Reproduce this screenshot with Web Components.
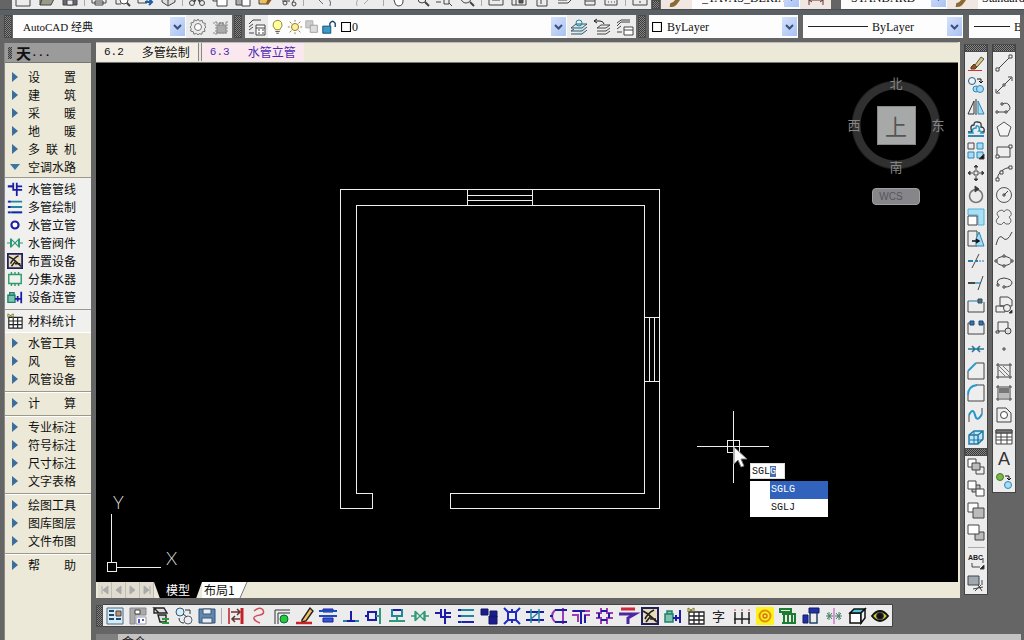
<!DOCTYPE html>
<html lang="zh-CN">
<head>
<meta charset="utf-8">
<title>AutoCAD 经典</title>
<style>
html,body{margin:0;height:100%;overflow:hidden;background:#656565}
body{font:12px/18px "Liberation Serif","Noto Sans CJK SC",serif;color:#111}
</style>
</head>
<body>
<cad-app></cad-app>
<script>
const define=(name,css,html,init)=>{
  customElements.define(name,class extends HTMLElement{
    constructor(){super();this.attachShadow({mode:'open'})}
    connectedCallback(){
      const t=document.createElement('template');
      t.innerHTML=`<style>*{box-sizing:border-box}${css}</style>`+(typeof html==='function'?html(this):html);
      this.shadowRoot.replaceChildren(t.content.cloneNode(true));
      if(init)init(this,this.shadowRoot);
    }
  });
};
const p=(d,a='')=>`<path d="${d}" ${a}/>`;
const N='stroke="#1c1ca8" stroke-width="2"',G='stroke="#2f9a78" stroke-width="2"',T='stroke="#1f86a0" stroke-width="2"',
      M='stroke="#a03ab0" stroke-width="2"',B='stroke="#1f74a4"',LB='fill="#a8dcf4" stroke="#2c87b4"';
const ICONS={
 newf:p('M4 1h7l4 4v12H1V1z'),open:p('M2 16L5 8h12l-4 8zM2 16V4h5l2 2h5v2','fill="#9a9a8a"'),
 save:p('M2 2h14v14H2z','fill="#667"')+p('M6 11h6v5H6z','fill="#eee"'),
 print:p('M5 7V2h8v5M2 7h14v7H2zM5 12h8v4H5z','fill="#eee"'),
 preview:p('M3 2h9v5M3 2v13h5')+'<circle cx="11" cy="11" r="4" fill="#fff"/>'+p('M14 14l3 3','stroke-width="2"'),
 publish:p('M2 5h9v9H2z')+p('M9 13h6m-2-3l3 3-3 3','stroke="#1f5fa4" stroke-width="2"'),
 box:p('M3 7l6-4 7 4v6l-7 4-6-4zM3 7l6 4 7-4M9 11v5','fill="#ddd"'),
 cut:p('M13 1L6 13M5 1l7 12','stroke-width="2"')+'<circle cx="4" cy="14" r="2.5"/><circle cx="14" cy="14" r="2.5"/>',
 copy:p('M2 2h9v10H2z')+p('M6 6h10v11H6z','fill="#fff"'),
 paste:p('M2 3h10v13H2z','fill="#aaa"')+p('M8 7h8v10H8z','fill="#fff"'),
 block:p('M2 4h9v11H2z','fill="#e8c060"')+p('M10 15l6-9','stroke="#8a5a20" stroke-width="3"'),
 match:p('M2 12h8M12 14l4-6','')+'<circle cx="5" cy="14" r="2"/><circle cx="14" cy="15" r="2"/>',
 undo:p('M7 5L2 10l5 5M2 10h8q6 0 4 7','stroke="#667"'),redo:p('M11 5l5 5-5 5M16 10H8q-6 0-4 7','stroke="#aaa"'),
 hand:p('M5 11L2 8l2-1 2 2V3h2v5-6h2v6-5h2v5-3h2v7q0 5-5 5-3 0-4-6z','fill="#fff"'),
 zoomp:'<circle cx="10" cy="10" r="4"/>'+p('M13 13l4 4','stroke-width="2"')+p('M1 10h4'),
 zoomw:p('M1 13h5M9 8h5v7H9zM14 14l3 3'),zoomx:'<circle cx="8" cy="9" r="5"/>'+p('M12 13l4 4','stroke-width="2"'),
 sheet:p('M2 2h14v14H2zM5 11h8'),sheets:p('M2 2h14v14H2zM2 8h14M6 8v8')+p('M9 10h4v4H9z','fill="#555"'),
 book:p('M4 6h10v11H4zM4 6l3-3h10l-3 3M8 10v5'),lay3:p('M2 11h9l5-4M2 14h10l4-4M2 8h9'),
 prop:p('M1 5h8v5H1zM6 8h10v8H6zM6 12h10'),calc:p('M3 2h12v14H3zM6 10h1m2 0h1m2 0h1M6 13h1m2 0h1m2 0h1'),
 help:p('M2 3h14v13H2zM9 8v3m0 1v2'),
 brushA:p('M2 16c6 1 6-5 11-9','stroke="#8a6a30" stroke-width="4"')+p('M12 8l5-6','stroke="#444" stroke-width="2"'),
 dim:p('M2 2v14M16 2v14M2 11h14M5 9l-3 2 3 2M13 9l3 2-3 2','stroke="#633"'),
 gear:p('M9 1l1.500 2.200 2.600-1 .6 2.600 2.700.5-.6 2.600L17 9l-1.600 1.700.6 2.600-2.700.6-.6 2.500-2.600-.8L9 17l-1.500-1.600-2.600.8-.6-2.500-2.700-.6.6-2.600L1 9l1.500-1.500-.6-2.600 2.700-.5.6-2.600 2.600 1z','stroke="#777"')+'<circle cx="9" cy="9" r="3.500" stroke="#777" fill="#fff"/>',
 ws:p('M4 3v14M1 5h14M15 3v12H1','stroke="#888" stroke-dasharray="2 1"')+p('M5 7h9v8H5z','fill="#aaa" stroke="#888"')+p('M7 7V5h4v2','stroke="#777"'),
 layers:p('M1 6l4-4h8M1 9l4-3M1 12l4-3M1 15h5')+p('M8 7h9v10H8z','fill="#fff"')+p('M8 10h9M10 12h2m2 0h2m-6 3h2m2 0h2'),
 layA:p('M1 10l5-4h11l-5 4zM1 13l3-2M1 13h11l5-4M1 16h11l5-4','stroke="#356" fill="#cde6ee"')+'<circle cx="9" cy="5" r="3" stroke="#1f86a0"/>',
 layB:p('M4 10l4-3h9l-4 3zM4 13h9l4-3M4 16h9l4-3','fill="#eee"')+p('M1 3h6q3 0 4 3M4 1L1 3l3 2','stroke="#222"'),
 layC:p('M1 8l4-4h9M1 5l4-3h9M1 11l4-3M1 14h5')+p('M8 9h9v8H8zM8 12h9','fill="#fff"'),
 bulb:p('M6 12Q2 8 4 4q5-5 9 0 2 4-2 8z','fill="#ffffa0" stroke="#887c20"')+p('M6 14h5M7 16h3'),
 sun:'<circle cx="9" cy="9" r="4" fill="#fff0a0" stroke="#8a7020"/>'+p('M9 1v2m0 12v2M1 9h2m12 0h2M3 3l2 2m8 8l2 2M15 3l-2 2M5 13l-2 2','stroke="#8a7020"'),
 vp:p('M2 2h8v8H2z','fill="#ccc" stroke="#aaa"')+p('M7 7h8v8H7z','fill="#ddd" stroke="#999"'),
 lock:p('M2 8h9v8H2z','fill="#3a9ac8" stroke="#146"')+p('M10 8V5q3-5 6 0v4','stroke="#146" stroke-width="1.5"'),
 sq:p('M4 4h10v10H4z','stroke="#000" stroke-width="1.2"'),
 erase:p('M4 13l3-3 3 3-2 2H4z','fill="#8c5420" stroke="#643a10"')+p('M8 11l6-8 3 2-7 8z','fill="#d8c880" stroke="#554"')+p('M1 16.500h14','stroke="#c33"'),
 cpy:'<circle cx="5" cy="5" r="3.500" fill="#e8f5fb" stroke="#357"/><circle cx="9" cy="13" r="3" '+LB+'/><circle cx="13" cy="13" r="3.500" '+LB+'/>'+p('M10 3h4v4m-2-2l2 2 2-2','stroke="#111"'),
 mirror:p('M7 3v13H1zM9 1v16','stroke="#333"')+p('M11 3v13h6z',LB),
 offset:p('M1 16h16M1 12h4q-3-7 2-7 0-4 4-3 4 0 3 5 4 0 3 5h-2','stroke="#333" stroke-width="1.300"')+p('M1 16h16M1 13h5q-2-5 3-5 0-4 3-1 1 3 0 4 3 0 2 2h3','stroke="#2596c8" stroke-width="1.500"'),
 array:p('M1 1h6v6H1z')+p('M10 1h6v6h-6zM1 10h6v6H1z',LB)+p('M10 10h6v6h-6z',LB)+p('M17 12v5h-5z','fill="#111"'),
 move:p('M7 7h4v4H7zM9 1v5M9 12v5M1 9h5M12 9h5','stroke="#444"')+p('M7 3l2-2 2 2zM7 15l2 2 2-2zM3 7L1 9l2 2zM15 7l2 2-2 2z','fill="#333"'),
 rotate:'<circle cx="9" cy="10" r="6.500" stroke="#777" stroke-width="1.600"/>'+p('M8 0l4 3-4 3z','fill="#333"'),
 scale:p('M1 1h16v16h-6V7H1z','fill="#a8e0f6" stroke="#5aaed4"')+p('M1 8h9v9H1z','fill="#fff"'),
 stretch:p('M1 1h9v15H1z')+p('M12 2l5 14H9V9z',LB)+p('M5 11h7m-3-2l3 2-3 2','stroke="#111" stroke-width="1.5"'),
 trim:p('M12 2L5 16','stroke="#444"')+p('M1 9h5m2 0h3','stroke="#2b7ca8" stroke-width="2"')+p('M12 9h5','stroke="#2b7ca8" stroke-dasharray="2 1"'),
 extend:p('M16 2L11 16')+p('M1 9h7','stroke="#111" stroke-width="1.5"')+p('M8 9h5','stroke="#2b9cc8" stroke-width="1.5"'),
 brk1:p('M1 5v11h16V6')+p('M1 5h11',B)+p('M11 3h4v4h-4z','fill="#2b7ca8"'),
 brk2:p('M5 5H1v11h16V5h-4')+p('M3 3h4v4H3zM12 3h4v4h-4z','fill="#2b7ca8" stroke="#247"'),
 join:p('M1 9h16M5 6l3 3-3 3M13 6l-3 3 3 3','stroke="#26749a" stroke-width="1.5"'),
 chamfer:p('M9 1h8v16H1V9','fill="#eee"')+p('M1 9l8-8','stroke="#2598cc" stroke-width="1.8"'),
 fillet:p('M9 1h8v16H1V11','fill="#eee"')+p('M1 11q0-9 9-10','stroke="#2598cc" stroke-width="1.8"'),
 blend:p('M2 16V9M15 8V2','stroke="#444"')+p('M2 9q4-8 6 0t7-1','stroke="#2595c8" stroke-width="2"'),
 explode:p('M2 7l5-4h9v8l-5 5H2zM2 7h9v9M11 7l5-4','fill="#bfe7f7" stroke="#2578a4" stroke-width="1.5"')+p('M7 4v12M3 12h13',B),
 o1:p('M1 1h8v8H1z','fill="#fff"')+p('M9 9h8v7H9z','fill="#eee"')+p('M5 5h8v7H5z','fill="#bbb"'),
 o2:p('M5 5h8v7H5z','fill="#bbb"')+p('M1 1h8v8H1z','fill="#fff"')+p('M9 9h8v7H9z','fill="#fff"'),
 o3:p('M1 1h10v9H1z','fill="#fff"')+p('M6 6h11v10H6z','fill="#bbb"'),
 o4:p('M8 8h9v8H8z','fill="#bbb"')+p('M1 1h11v9H1z','fill="#fff"'),
 abc:'<text x="1" y="8" font-family="Liberation Sans" font-size="7" font-weight="700" fill="#222" stroke="none">ABC</text>'+p('M5 11v4h8M16 6v5')+p('M17 13v4h-4z','fill="#111"'),
 hback:p('M1 2h11v9H1z','fill="#a0a8b0"')+p('M6 15l10-2M8 17l6-6M11 11l4 6M15 6v5'),
 line:p('M3 15L15 3')+p('M1 14h3v3H1zM14 1h3v3h-3z','fill="#fff"'),
 xline:p('M2 16L16 2M1 13v4h4M13 1h4v4')+p('M8 8h2v2H8z','fill="#fff"'),
 pline:p('M2 14h9q6-2 3-7-2-3-7-1')+p('M1 13h2v2H1zM10 13h2v2h-2zM6 5h2v2H6z','fill="#fff"'),
 poly:p('M9 2l7 5-3 9H5L2 7z','stroke="#555" fill="#f4f4f4"'),
 rect:p('M2 5h13v10H2z','fill="#eee"')+p('M1 13h3v3H1zM14 3h3v3h-3z','fill="#fff"'),
 arc:p('M2 16Q3 5 16 3')+p('M1 14h3v3H1zM14 2h3v3h-3zM5 7h3v3H5z','fill="#fff"'),
 circle:'<circle cx="9" cy="9" r="7.5" stroke="#555"/>'+p('M9 9l4-4M8 8h2v2H8z'),
 cloud:p('M4 9Q0 5 4 3q4-2 5 1 2-4 6-1 3 4-1 6 4 4 0 7-4 1-5-2-2 4-6 2-4-3 1-7z','stroke="#666"'),
 spline:p('M1 15Q4 3 8 8t9-6','stroke="#444"'),
 ellipse:'<ellipse cx="9" cy="9" rx="7.5" ry="4.500"/>'+p('M0 8h2v2H0zM16 8h2v2h-2zM8 3h2v2H8zM8 13h2v2H8z','fill="#fff"'),
 earc:p('M3 11Q0 5 9 4q8 1 8 5-1 4-7 4')+p('M8 12h2v2H8zM2 10h2v2H2z','fill="#fff"'),
 insblk:p('M5 1h8l4 3v6H5zM1 10h9v6H1z','fill="#eee"')+'<circle cx="12" cy="12" r="3.5" fill="#eee"/>'+p('M17 14v3h-3z','fill="#111"'),
 mkblk:p('M3 4h10v9H3zM1 13h3v2H1z','fill="#eee"')+'<circle cx="13" cy="13" r="3" fill="#ddd"/>',
 point:p('M8 8h2v2H8z'),
 hatch:p('M1 3h16M1 15h16M3 1v16M15 1v16')+p('M4 4l10 10M4 8l6 6M8 4l6 6','stroke="#777"'),
 grad:p('M4 4h10v5H4z','fill="#777" stroke="none"')+p('M4 9h10v5H4z','fill="#bbb" stroke="none"')+p('M1 3h16M1 15h16M3 1v16M15 1v16'),
 region:p('M2 2h9l5 5v9H2z','fill="#eee"')+'<circle cx="9" cy="9" r="3.5" fill="#fff"/>',
 table:p('M1 2h16v14H1zM1 5h16M1 9h16M1 12h16M6 5v11M12 5v11','fill="#fff"')+p('M1 2h16v3H1z','fill="#777"'),
 text:'<text x="3" y="15" font-family="Liberation Sans" font-size="18" fill="#333" stroke="none">A</text>',
 addsel:'<circle cx="5" cy="5" r="3.5" fill="#7ab648" stroke="#447a22"/><circle cx="13" cy="13" r="3.5" '+LB+'/>'+p('M10 4h4v4m-2-2l2 2 2-2','stroke="#111"'),
 pipe:p('M1 6h6M11 2v15M7 2v8h10','stroke="#1c1ca8" stroke-width="2"')+p('M1 6h6M11 6h6',N),
 multi:p('M2 3h15M2 9h15M2 15h15',T)+p('M1 3h3M1 9h3M1 15h3M5 15h12','stroke="#2020b0" stroke-width="2"'),
 riser:'<circle cx="9" cy="9" r="4" stroke="#1c1ca8" stroke-width="2.4" fill="#fff"/>',
 valve:p('M0 9h4M14 9h4M4 4v10M14 4v10M5 5l8 8V5l-8 8z','stroke="#2f9a78" stroke-width="1.3"'),
 equip:p('M1 1h16v16H1z','fill="#e8dcb8" stroke="#202060" stroke-width="2"')+p('M4 12q3-6 9-9M2 4l5 3 9 8M5 15l4-5M9 12h6','stroke="#222" stroke-width="1.700"'),
 manifold:p('M2 4h14v10H2zM5 1v3M9 1v3M13 1v3M5 14v3M9 14v3M13 14v3','stroke="#2f9a68" stroke-width="1.6"'),
 conn:p('M1 7h8v8H1zM3 7V4h5v3','fill="#7cc4ae" stroke="#208068" stroke-width="1.5"')+p('M9 11h7M16 3v13M12 8v6',N),
 stat:p('M2 5h15v12H2zM2 9h15M2 13h15M7 5v12M12 5v12','stroke="#222" stroke-width="1.3" fill="#fff"')+p('M1 1l6 4M7 1L1 5M1 1v4M7 1v4','stroke="#77761c"'),
 b1:p('M1 1h16v16H1z','fill="#d4ecf6" stroke="#486a84"')+p('M3 4h5M3 8h5M3 12h5M10 12h5','stroke="#246" stroke-width="2"')+p('M10 4h5v5h-5z','fill="#c49070"'),
 b2:p('M1 1h16v7H6v9H1z','fill="#aaa" stroke="#888"')+p('M7 10h10v7H7z','fill="#fff" stroke="#99a"')+p('M9 13h2m2 0h2M9 15h2','stroke="#22a" stroke-width="1.6"')+p('M6 3h5v4H6z','fill="#fff"'),
 b3:p('M2 1h10l3 5H7zM2 1v5h5M6 8h8v7H8z','stroke="#222" fill="#ddd" stroke-width="1.4"')+p('M10 16h7M10 12h7','stroke="#2a9a3a" stroke-width="2"'),
 b4:'<circle cx="5" cy="5" r="4" fill="#d8ecf8" stroke="#357"/><circle cx="13" cy="13" r="4" fill="#eee" stroke="#567"/>'+p('M10 3h5v4M4 11q0 5 5 5M8 7l4 3','stroke="#333"'),
 b5:p('M1 2h16v14H1z','fill="#5e88b4" stroke="#2c5478"')+p('M5 2h8v5H5zM4 11h10v5H4z','fill="#e4eef4" stroke="#456"'),
 c1:p('M2 1v16','stroke="#c85058" stroke-width="2"')+p('M15 1v16','stroke="#c81e28" stroke-width="3"')+p('M4 5h9M5 12h8M10 2l3 3-3 3M8 9l-3 3 3 3','stroke="#633" stroke-width="1.5"'),
 c2:p('M4 4q6-5 9-1 2 4-3 5-7 1-6 4 2 3 6 4','stroke="#d44c58" stroke-width="1.5"'),
 c3:p('M2 17V3h15M5 17V6h12','stroke="#333"')+'<circle cx="11" cy="12" r="4" fill="#28c838" stroke="#064"/>',
 c4:p('M6 13L14 1l3 3-7 10-4 1z','fill="#f0c060" stroke="#222" stroke-width="1.4"')+p('M0 16h16','stroke="#c22" stroke-width="2.5"'),
 c5:p('M4 2h10v3H4zM4 11h10v4H4z','fill="#3458c8" stroke="#1c1ca8"')+p('M0 4h18M0 9h18','stroke="#1c4cb8" stroke-width="2"'),
 c6:p('M9 4v8M1 14h16','stroke="#1f86a0" stroke-width="2"')+p('M5 14h8M9 4v9',N),
 c7:p('M3 5h8v8H3z',N)+p('M15 1v16M11 9h4',G)+p('M0 9h3',N),
 c8:p('M4 3h10v6H4z',T)+p('M1 14h16M9 9v4',G)+p('M5 3h8',N),
 c9:p('M1 2h7v6H1zM10 4h7v6h-7zM9 9h8v8H9z','fill="#1c1c90" stroke="#111860"'),
 d1:p('M5 5h8v8H5zM1 1l4 4M17 1l-4 4M1 17l4-4M17 17l-4-4M9 2v3M9 13v3','stroke="#1c2cc0" stroke-width="2"'),
 d2:p('M0 5h18M0 13h18',N)+p('M5 2v14M13 2v14M5 12l8-7','stroke="#1f86a0" stroke-width="1.500"'),
 d3:p('M6 3q-6 6 0 12M14 1v16',M)+p('M6 3h12M6 15h12M1 9h3',N),
 d4:p('M0 4h18M0 8h6v7M12 8h6',M)+p('M9 4v13M13 8v8M1 4h12',N),
 d5:p('M6 1v5H1M12 1v5h6M6 17v-6H1M12 17v-6h6',M)+p('M4 6v5M14 6v5M6 4h6M6 13h6',N),
 d6:p('M1 7h16l-7 4v6','stroke="#4c28a0" stroke-width="3"')+p('M3 2h14','stroke="#d02838" stroke-width="3"'),
 zi:'<text x="2" y="14" font-family="Noto Sans CJK SC" font-size="13" fill="#222" stroke="none">字</text>',
 e1:p('M2 5v12M9 5v12M16 5v12M1 12h16','stroke="#222" stroke-width="1.5"')+p('M2 2v2M9 2v2M16 2v2','stroke="#c44"'),
 e2:p('M0 0h18v18H0z','fill="#fff21c" stroke="none"')+'<circle cx="9" cy="9" r="5.500" stroke="#e09010" stroke-width="2"/><circle cx="9" cy="9" r="2" stroke="#d07020" stroke-width="1.5"/>',
 e3:p('M1 2h11v3H1zM5 7v8M9 7v8M13 7v8M3 16h14M3 7h13v9','stroke="#1c7c30" stroke-width="2"'),
 e4:p('M7 1h10v5H7zM1 8h5v8H1z','fill="#2030a8" stroke="#181860"')+p('M8 6v10h3M15 6v10h-4','stroke="#246" stroke-width="1.500"'),
 e5:p('M1 9h7M10 9h7M4 5v8M14 5v8M2 6l5 6M7 6l-5 6M11 6l5 6M16 6l-5 6','stroke="#467a68"')+p('M9 1v16','stroke="#c040c0"'),
 e6:p('M2 6h11v10H2z','fill="#fff" stroke="#111" stroke-width="1.5"')+p('M2 6l4-4h11l-4 4z','fill="#48c8d8" stroke="#111" stroke-width="1.5"')+p('M13 6l4-4v9l-4 5z','fill="#e8f4f4" stroke="#111" stroke-width="1.5"'),
 e7:p('M1 9q8-10 16 0-8 10-16 0z','fill="#c8c83c" stroke="#111" stroke-width="2"')+'<circle cx="9" cy="9" r="3.500" fill="#111"/>'
};
define('cad-icon',':host{display:block;width:18px;height:18px;flex:none}svg{display:block;width:100%;height:100%;overflow:visible}',
  h=>`<svg viewBox="0 0 18 18" fill="none" stroke="#444" aria-hidden="true">${ICONS[h.getAttribute('name')]||''}</svg>`);
define('cad-tool',`:host{display:block;flex:none;width:var(--tool-w,23px);height:var(--tool-h,23px)}
 button{display:grid;place-items:center;width:100%;height:100%;padding:0;border:0;background:none}`,
  h=>`<button type="button" aria-label="${h.getAttribute('icon')}"><cad-icon name="${h.getAttribute('icon')}"></cad-icon></button>`);
define('cad-grip',`:host{display:block;flex:none;width:8px;height:100%;background:repeating-conic-gradient(#3a3a3a 0 25%,#858585 0 50%) 0 0/2px 2px;border:1px solid #4c4c4c}
 :host([flat]){width:100%;height:8px}`,'');
define('cad-sep',`:host{display:block;flex:none;width:6px;align-self:stretch;background:linear-gradient(#aaa,#aaa) center/1px 76% no-repeat}
 :host([flat]){width:100%;height:6px;background-size:76% 1px}`,'');
define('cad-bar',`:host{display:flex;align-items:center;flex:none;background:#ececec}
 :host([vertical]){flex-direction:column;--tool-h:22px;--tool-w:22px}`,'<slot></slot>');
define('cad-select',`:host{display:grid;min-width:0;background:#fdfdfd;height:23px}
 select,.deco,i{grid-area:1/1}
 select{appearance:none;width:100%;min-width:0;height:100%;border:0;background:transparent;padding:0 0 0 var(--inset,10px);font:var(--size,12px)/18px "Liberation Serif","Noto Sans CJK SC",serif;color:#111;border-radius:0}
 .deco{display:flex;align-items:center;justify-self:start;pointer-events:none}
 i{justify-self:end;width:15px;margin:2px 1px;background:linear-gradient(135deg,#d6e2fc,#a9c2f2);display:grid;place-items:center;pointer-events:none}`,
 h=>`<select aria-label="${h.getAttribute('label')}"><option>${h.getAttribute('value')}</option></select><span class="deco"><slot></slot></span>${h.hasAttribute('plain')?'':'<i><svg width="9" height="6" fill="none" stroke="#3c4f7c" stroke-width="2"><path d="M1 1l3.500 3.500L8 1"/></svg></i>'}`);
define('cad-stroke',':host{display:block;height:1px;background:#222;width:60px}','');

const tools=s=>s.split(' ').map(n=>n==='|'?'<cad-sep></cad-sep>':`<cad-tool icon="${n}"></cad-tool>`).join('');
const vtools=s=>s.split(' ').map(n=>n==='|'?'<cad-sep flat></cad-sep>':`<cad-tool icon="${n}"></cad-tool>`).join('');

define('cad-standard-row',`:host{display:flex;align-items:flex-end;height:10px;overflow:hidden;padding-left:12px;background:#656565;border-bottom:1px solid #4a4e50}
 .wide{--tool-w:37px}.history{display:flex}.g{margin:0 1px}cad-bar{height:23px}.s1{width:108px}.s2{width:106px;margin-left:10px}.s3{flex:1 0 40px}.tool{padding:0 4px;background:#f0e6e2}`,
 `<cad-bar>${tools('newf open save | print preview publish box | cut copy paste block match |')}<span class="history wide">${tools('undo redo')}</span>${tools('| hand zoomp zoomw zoomx | sheet sheets book lay3 prop calc | help')}</cad-bar>
 <cad-grip class="g"></cad-grip><cad-bar class="tool">${tools('brushA')}</cad-bar>
 <cad-select class="s1" label="文字样式" value="_TAVAS_DERIAL"></cad-select>
 <cad-bar class="tool">${tools('dim')}</cad-bar><cad-select class="s2" label="标注样式" value="STANDARD"></cad-select>
 <cad-bar class="tool">${tools('brushA')}</cad-bar><cad-select class="s3" label="表格样式" value="Standard" plain style="--inset:4px"></cad-select>`);
define('cad-property-row',`:host{display:flex;height:28px;padding:5px 4px 0;background:linear-gradient(#5a6064,#5a6064) top/100% 5px no-repeat,#656565;overflow:hidden}
 cad-bar{height:23px}.g{margin:0 1px 0 0}.ws{width:173px;--size:11px}.layer{width:299px;--inset:84px}.layer cad-icon{margin-left:1px;width:16px}.layer cad-icon:first-child{margin-left:2px}
 .color{width:149px;--inset:18px}.ltype{width:160px;margin-left:5px;--inset:69px}.lweight{flex:1 0 50px;margin-left:6px;--inset:45px}.g2{margin:0 3px 0 2px}
 .color cad-icon{width:16px}.ltype cad-stroke{margin-left:5px}.lweight cad-stroke{width:36px;margin-left:5px}`,
 `<cad-grip class="g"></cad-grip><cad-select class="ws" label="工作空间" value="AutoCAD 经典"></cad-select>
 <cad-bar>${tools('gear ws')}</cad-bar><cad-grip class="g2"></cad-grip>
 <cad-bar>${tools('layers')}</cad-bar><cad-select class="layer" label="图层" value="0"><cad-icon name="bulb"></cad-icon><cad-icon name="sun"></cad-icon><cad-icon name="vp"></cad-icon><cad-icon name="lock"></cad-icon><cad-icon name="sq"></cad-icon></cad-select>
 <cad-bar>${tools('layA layB layC')}</cad-bar><cad-grip class="g2"></cad-grip>
 <cad-select class="color" label="颜色" value="ByLayer"><cad-icon name="sq"></cad-icon></cad-select>
 <cad-select class="ltype" label="线型" value="ByLayer"><cad-stroke></cad-stroke></cad-select>
 <cad-select class="lweight" label="线宽" value="ByLayer" plain><cad-stroke></cad-stroke></cad-select>`);

define('side-item',`:host{display:block}
 button{display:flex;align-items:center;width:100%;height:18px;border:0;padding:0;background:none;color:#111;font:12px/18px "Noto Sans CJK SC",sans-serif}
 .m{width:19px;display:grid;place-items:center;margin-right:4px}cad-icon{width:16px;height:16px}
 .t{width:48px;white-space:nowrap;text-align-last:justify}svg{display:block}`,
 h=>{const i=h.getAttribute('icon');return `<button type="button"><span class="m">${i?`<cad-icon name="${i}"></cad-icon>`:h.hasAttribute('open')?'<svg width="10" height="6"><path d="M0 0h10L5 6z" fill="#3c76a4"/></svg>':'<svg width="6" height="10"><path d="M0 0l6 5-6 5z" fill="#3c6e9c"/></svg>'}</span><span class="t"><slot></slot></span></button>`});
const items=s=>s.split(',').map(x=>`<side-item>${x}</side-item>`).join('');
define('cad-sidebar',`:host{display:flex;flex-direction:column;background:#ece9d8;border-left:1px solid #888;margin:6px 1px 0 4px;overflow:hidden}
 header{display:flex;align-items:center;height:20px;flex:none;padding-left:3px;background:#9b9b9b;border-bottom:1px solid #777;font:bold 15px/18px "Noto Sans CJK SC",sans-serif}
 header span{font:bold 11px/18px "Liberation Mono",monospace}
 header cad-grip{width:4px;height:12px;border:0;margin-right:4px}
 nav{padding:5px 0 0 0}section{border-bottom:1px solid #9c998c;box-shadow:0 1px #fff;padding:2px 0 3px}
 section:first-child{padding:0 0 1px}section.sub{background:#f0f0ef;padding:2px 0 3px}section.stat{background:#f0f0ef;padding:2px 0 1px;border-color:#f0f0ef}section:last-child{border:0;box-shadow:none}`,
 `<header><cad-grip></cad-grip>天<span>...</span></header><nav aria-label="天正">
 <section>${items('设 置,建 筑,采 暖,地 暖,多 联 机')}<side-item open>空调水路</side-item></section>
 <section class="sub"><side-item icon="pipe">水管管线</side-item><side-item icon="multi">多管绘制</side-item><side-item icon="riser">水管立管</side-item><side-item icon="valve">水管阀件</side-item><side-item icon="equip">布置设备</side-item><side-item icon="manifold">分集水器</side-item><side-item icon="conn">设备连管</side-item></section>
 <section class="stat"><side-item icon="stat">材料统计</side-item></section>
 <section>${items('水管工具,风 管,风管设备')}</section><section>${items('计 算')}</section>
 <section>${items('专业标注,符号标注,尺寸标注,文字表格')}</section><section>${items('绘图工具,图库图层,文件布图')}</section><section>${items('帮 助')}</section></nav>`);

define('doc-tab',`:host{display:block}button{display:flex;gap:18px;align-items:center;height:18px;padding:0 8px;border:0;border-right:1px solid #888;background:#f3efe4;color:#111;font:12px/18px "Noto Sans CJK SC",sans-serif}
 b{font:11px/18px "Liberation Mono",monospace}:host([active]) button{background:#fbe8ee;color:#4a2cb4;border:0;padding:0 8px}`,
 h=>`<button type="button"><b>${h.getAttribute('number')}</b><slot></slot></button>`);
define('view-compass',`:host{display:flex;flex-direction:column;align-items:center;gap:14px;width:98px;color:#858585;font:13px/14px "Noto Sans CJK SC",sans-serif}
 .dial{display:grid;grid-template:14px 70px 14px/14px 70px 14px;place-items:center;background:radial-gradient(circle,transparent 35px,#303030 36px 43px,transparent 45px)}
 .n{grid-area:1/2}.w{grid-area:2/1}.e{grid-area:2/3}.s{grid-area:3/2}
 .top{grid-area:2/2;width:39px;height:39px;padding:0;border:1px solid #888;background:#a7a9a9;color:#555;font:22px/34px "Noto Sans CJK SC",sans-serif}
 .wcs{width:48px;height:17px;border:1px solid #a0a0a4;border-radius:4px;background:#85858a;color:#55555a;padding:0 14px 0 4px;font:10px/14px "Liberation Sans",sans-serif}`,
 `<div class="dial"><span class="n">北</span><span class="w">西</span><button class="top" type="button">上</button><span class="e">东</span><span class="s">南</span></div><button class="wcs" type="button">WCS</button>`);
define('command-entry',`:host{display:block;width:78px;font:10px/18px "Liberation Mono",monospace;color:#111}
 input{display:block;width:35px;height:16px;margin:0 0 2px;padding:0 1px;border:1px solid #ddd;background:#fff;font:inherit;line-height:14px;outline:0;caret-color:transparent;border-radius:0;color:#111}
 input::selection{background:#4a6ea8;color:#fff}
 ul{list-style:none;margin:0;padding:0 0 0 20px;background:#fff}li{height:18px;padding-left:1px}li[aria-selected=true]{background:#3163bd;color:#fff}`,
 `<input aria-label="命令" value="SGLG"><ul role="listbox" aria-label="命令建议"><li role="option" aria-selected="true">SGLG</li><li role="option" aria-selected="false">SGLJ</li></ul>`,
 (h,r)=>{const i=r.querySelector('input');i.focus();i.setSelectionRange(3,4)});
define('drawing-canvas',`:host{display:block;position:relative;flex:1;min-height:0;background:#000;overflow:hidden}
 svg{position:absolute;fill:none;stroke:#eee;shape-rendering:crispEdges}
 .plan{inset:0;width:100%;height:100%}.ucs{left:8px;bottom:4px}.ucs text{fill:#ddd;stroke:none;font:300 18px Lato,sans-serif}
 view-compass{position:absolute;top:13px;right:13px}command-entry{position:absolute;left:654px;top:400px}`,
 `<svg class="plan" role="img" aria-label="平面图"><path d="M276.500 430.500H260.500V142.500H548.500V430.500H354.500V445.500H563.500V126.500H244.500V445.500H276.500Z"/>
 <path d="M371.500 126v16M436.500 126v16M371 132.500h65M371 137.500h65M548 254.500h15M548 318.500h15M553.500 254v64M558.500 254v64"/>
 <path d="M601 383.500h30m13 0h29M637.500 348v29m0 13v30M631.500 377.500h12v12h-12zM631 383.500h13M637.500 377v13"/>
 <path d="M638 384v17l4-4 3 7 3-1-3-7h6z" fill="#fff" stroke="#777" shape-rendering="auto"/></svg>
 <svg class="ucs" width="90" height="86"><path d="M3.500 70.500h9v9h-9zM7.500 70V22M13 75.500h44"/><text x="9" y="17">Y</text><text x="62" y="73">X</text></svg>
 <view-compass></view-compass><command-entry></command-entry>`);
define('layout-tabs',`:host{display:flex;height:16px;flex:none;background:#ece9d8;font:12px/16px "Noto Sans CJK SC",sans-serif}
 button{border:0;padding:0;font:inherit}.nav{width:14px;background:#e0ddd0;color:#999;border-right:1px solid #c0bdb0;display:grid;place-items:center}
 .navs{display:flex;padding-left:2px}.model{width:48px;background:#000;color:#fff;clip-path:polygon(0 0,100% 0,88% 100%,12% 100%)}
 .layout{display:flex;background:none;color:#111}.layout span{background:#fff;padding-left:2px}`,
 `<div class="navs">${['M2 1v8M8 1v8L3 5z','M7 1v8L2 5z','M2 1v8l5-4z','M8 1v8M2 1v8l5-4z'].map((d,i)=>`<button class="nav" type="button" aria-label="布局 ${i+1}"><svg width="10" height="10" fill="#aaa" stroke="#aaa"><path d="${d}"/></svg></button>`).join('')}</div>
 <button class="model" type="button">模型</button><button class="layout" type="button"><span>布局1</span><svg width="14" height="16" fill="none" stroke="#777"><path d="M0 0h12L5 16H0z" fill="#fff" stroke="none"/><path d="M12 0L5 16"/></svg></button>`);
define('cad-editor',`:host{display:flex;flex-direction:column;min-width:0;background:#ece9d8;border-right:2px solid #ece9d8}
 .tabs{display:flex;height:21px;flex:none;align-items:flex-start;border-top:1px solid #bbb;border-bottom:1px solid #777}.gap{width:3px;height:18px;border-right:1px solid #888}`,
 `<div class="tabs"><doc-tab number="6.2">多管绘制</doc-tab><span class="gap"></span><doc-tab number="6.3" active>水管立管</doc-tab></div><drawing-canvas></drawing-canvas><layout-tabs></layout-tabs>`);
define('cad-app',`:host{display:grid;grid-template:auto auto minmax(0,1fr)/minmax(0,1fr);height:100vh;background:#656565}
 .body{display:grid;grid-template:minmax(0,1fr) auto auto/92px minmax(0,1fr) auto;min-height:0;margin-top:-1px;column-gap:4px}
 cad-sidebar{grid-area:1/1/4/2}cad-editor{grid-area:1/2;margin-top:5px}.right{grid-area:1/3;display:flex;align-items:flex-start;gap:4px;padding:7px 8px 0 0}
 .right cad-bar{width:24px;border:1px solid #444;border-top:0}
 .bottom{grid-area:2/2/3/4;padding:6px 0 7px;display:flex;align-items:center}.bottom cad-bar{height:23px;border:1px solid #444;border-left:0;padding-right:1px}
 .bottom cad-grip{height:22px;width:7px}
 .cmd{grid-area:3/2/4/4;height:6px;overflow:hidden;background:#c3c3c3;border-left:22px solid #808080;margin-right:3px;padding-left:4px;font:12px/15px "Noto Sans CJK SC",sans-serif}`,
 `<cad-standard-row></cad-standard-row><cad-property-row></cad-property-row>
 <div class="body"><cad-sidebar></cad-sidebar><cad-editor></cad-editor>
 <div class="right"><cad-bar vertical><cad-grip flat></cad-grip>${vtools('erase cpy mirror offset array move rotate scale stretch trim extend brk1 brk2 join chamfer fillet blend explode')}<cad-grip flat></cad-grip>${vtools('o1 o2 o3 o4 | abc hback')}</cad-bar>
 <cad-bar vertical><cad-grip flat></cad-grip>${vtools('line xline pline poly rect arc circle cloud spline ellipse earc insblk mkblk point hatch grad region table text addsel')}</cad-bar></div>
 <div class="bottom"><cad-grip></cad-grip><cad-bar>${tools('b1 b2 b3 b4 b5 | c1 c2 c3 c4 c5 c6 c7 c8 valve pipe multi c9 d1 d2 d3 d4 d5 d6 equip conn stat zi e1 e2 e3 e4 e5 e6 e7')}</cad-bar></div>
 <div class="cmd">命令:</div></div>`);
</script>
</body>
</html>
